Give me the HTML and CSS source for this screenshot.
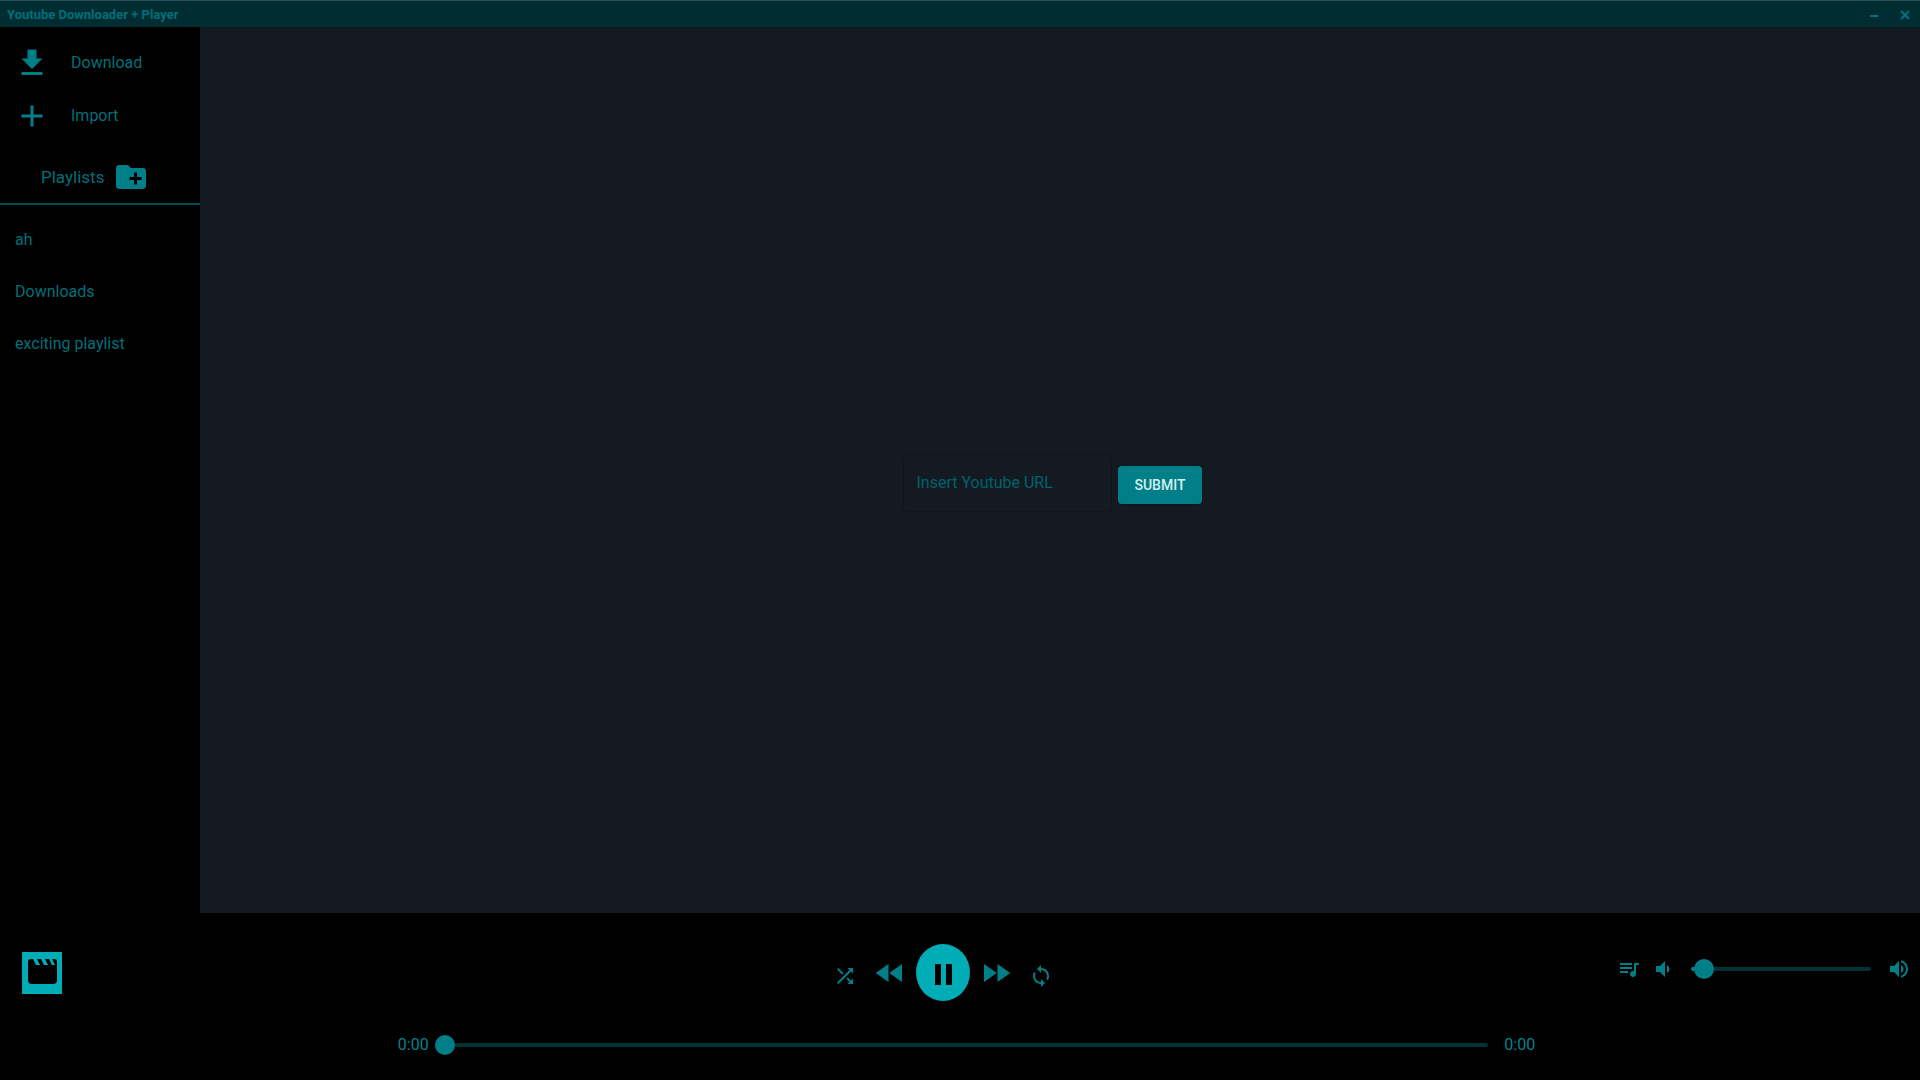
FILE: index.html
```html
<!DOCTYPE html>
<html lang="en">
<head>
    <meta charset="UTF-8">
    <meta name="viewport" content="width=device-width, initial-scale=1.0">
    <title>Youtube Downloader + Player</title>
    <link rel="stylesheet" href="styles.css">
</head>
<body>
    <header class="titlebar">
        <h1>Youtube Downloader + Player</h1>
        <div class="window-buttons">
            <button aria-label="Minimize"><svg width="10" height="10" viewBox="0 0 10 10"><path d="M1 6h8"/></svg></button>
            <button aria-label="Close"><svg width="10" height="10" viewBox="0 0 10 10"><path d="M1 1l8 8M9 1l-8 8"/></svg></button>
        </div>
    </header>

    <div class="content">
        <nav class="sidebar">
            <button class="nav-item">
                <svg class="icon" width="36" height="36" viewBox="0 0 24 24"><path d="M19 9h-4V3H9v6H5l7 7 7-7zM5 18v2h14v-2H5z"/></svg>
                <span>Download</span>
            </button>
            <button class="nav-item">
                <svg class="icon" width="36" height="36" viewBox="0 0 24 24"><path d="M19 13h-6v6h-2v-6H5v-2h6V5h2v6h6v2z"/></svg>
                <span>Import</span>
            </button>
            <div class="playlists-header">
                <h2>Playlists</h2>
                <button aria-label="New playlist">
                    <svg class="icon" width="36" height="36" viewBox="0 0 24 24"><path d="M20 6h-8l-2-2H4c-1.110 0-1.990.890-1.990 2L2 18c0 1.110.890 2 2 2h16c1.110 0 2-.890 2-2V8c0-1.110-.890-2-2-2zm-1 8h-3v3h-2v-3h-3v-2h3V9h2v3h3v2z"/></svg>
                </button>
            </div>
            <ul class="playlists">
                <li><a href="#">ah</a></li>
                <li><a href="#">Downloads</a></li>
                <li><a href="#">exciting playlist</a></li>
            </ul>
        </nav>

        <main class="main">
            <form class="url-form">
                <input type="text" class="url-input" placeholder="Insert Youtube URL" aria-label="Insert Youtube URL">
                <button type="submit" class="submit-btn">Submit</button>
            </form>
        </main>
    </div>

    <footer class="player">
        <div class="player-top">
            <div class="cover">
                <svg width="40" height="42" viewBox="0 0 40 42">
                    <rect class="cover-bg" width="40" height="42"/>
                    <path d="M9 7h2l3 6h4l-3-6h4l3 6h4l-3-6h4l3 6h3l-3-6h3q2 0 2 3v18q0 4-4 4H10q-4 0-4-4V10q0-3 3-3z"/>
                </svg>
            </div>
            <div class="controls">
                <button class="small-btn" aria-label="Shuffle"><svg class="icon" width="24" height="24" viewBox="0 0 24 24"><path d="M10.590 9.170L5.410 4 4 5.410l5.170 5.170 1.420-1.410zM14.500 4l2.040 2.040L4 18.590 5.410 20 17.960 7.460 20 9.500V4h-5.500zm.330 9.410l-1.410 1.410 3.130 3.130L14.500 20H20v-5.500l-2.040 2.040-3.130-3.130z"/></svg></button>
                <button aria-label="Previous"><svg class="icon" width="36" height="36" viewBox="0 0 24 24"><path d="M11 18V6l-8.500 6 8.500 6zm.5-6l8.500 6V6l-8.500 6z"/></svg></button>
                <button class="pause-btn" aria-label="Pause"><svg width="20" height="24" viewBox="0 0 20 24"><path d="M2 3h6v21H2zM13 3h6v21h-6z"/></svg></button>
                <button aria-label="Next"><svg class="icon" width="36" height="36" viewBox="0 0 24 24"><path d="M4 18l8.500-6L4 6v12zm9-12v12l8.500-6L13 6z"/></svg></button>
                <button class="small-btn" aria-label="Repeat"><svg class="icon" width="24" height="24" viewBox="0 0 24 24"><path d="M12 4V1L8 5l4 4V6c3.310 0 6 2.690 6 6 0 1.010-.250 1.970-.700 2.800l1.460 1.460C19.540 15.030 20 13.570 20 12c0-4.420-3.580-8-8-8zm0 14c-3.310 0-6-2.690-6-6 0-1.010.250-1.970.700-2.800L5.240 7.740C4.460 8.970 4 10.430 4 12c0 4.420 3.580 8 8 8v3l4-4-4-4v3z"/></svg></button>
            </div>
            <div class="volume">
                <button aria-label="Queue"><svg class="icon" width="24" height="24" viewBox="0 0 24 24"><path d="M15 6H3v2h12V6zm0 4H3v2h12v-2zM3 16h8v-2H3v2zM17 6v8.180c-.310-.110-.650-.180-1-.180-1.660 0-3 1.340-3 3s1.340 3 3 3 3-1.340 3-3V8h3V6h-5z"/></svg></button>
                <svg class="icon" width="24" height="24" viewBox="0 0 24 24"><path d="M18.500 12c0-1.770-1.020-3.290-2.500-4.030v8.050c1.480-.730 2.500-2.250 2.500-4.020zM5 9v6h4l5 5V4L9 9H5z"/></svg>
                <input type="range" class="slider volume-slider" min="0" max="100" value="2" aria-label="Volume">
                <svg class="icon" width="24" height="24" viewBox="0 0 24 24"><path d="M3 9v6h4l5 5V4L7 9H3zm13.500 3c0-1.770-1.020-3.290-2.500-4.030v8.050c1.480-.730 2.500-2.250 2.500-4.020zM14 3.230v2.060c2.890.860 5 3.540 5 6.710s-2.110 5.850-5 6.710v2.060c4.010-.910 7-4.490 7-8.770s-2.990-7.860-7-8.770z"/></svg>
            </div>
        </div>
        <div class="seek">
            <span>0:00</span>
            <input type="range" class="slider seek-slider" min="0" max="100" value="0" aria-label="Seek">
            <span>0:00</span>
        </div>
    </footer>
</body>
</html>
```
FILE: styles.css
```css
* {
    box-sizing: border-box;
}

body {
    margin: 0;
    height: 100vh;
    display: flex;
    flex-direction: column;
    background-color: #000;
    color: #006f78;
    font-family: Roboto, sans-serif;
    font-size: 16px;
    line-height: 24px;
    overflow: hidden;
}

h1, h2 {
    margin: 0;
    font-weight: 400;
    font-size: 17px;
}

button {
    display: flex;
    align-items: center;
    justify-content: center;
    padding: 0;
    border: none;
    background: none;
    color: inherit;
    font: inherit;
    cursor: pointer;
}

svg {
    display: block;
    flex-shrink: 0;
}

.icon {
    fill: #007f88;
}

/* Title bar */
.titlebar {
    display: flex;
    align-items: center;
    justify-content: space-between;
    height: 27px;
    padding: 2px 10px 0 7px;
    border-top: 1px solid #2c4f56;
    background-color: #002d32;
}

.titlebar h1 {
    font-size: 13px;
    font-weight: 700;
}

.window-buttons {
    display: flex;
    gap: 21px;
}

.window-buttons svg {
    stroke: #00737b;
    stroke-width: 2;
}

.content {
    flex: 1;
    display: flex;
    min-height: 0;
}

/* Sidebar */
.sidebar {
    width: 200px;
    padding-top: 9px;
}

.nav-item {
    width: 100%;
    height: 53px;
    padding-left: 14px;
    gap: 21px;
    justify-content: flex-start;
}

.playlists-header {
    display: flex;
    align-items: center;
    gap: 9px;
    height: 63px;
    padding: 9px 0 0 41px;
    border-bottom: 2px solid #004b51;
}

.playlists {
    margin: 0;
    padding: 9px 0;
    list-style: none;
}

.playlists a {
    display: block;
    padding: 14px 15px;
    color: inherit;
    text-decoration: none;
}

/* Download form */
.main {
    flex: 1;
    display: flex;
    align-items: center;
    justify-content: center;
    padding: 26px 15px 0 0;
    background-color: #131a21;
}

.url-form {
    display: flex;
    align-items: center;
    gap: 6px;
}

.url-input {
    width: 209px;
    height: 58px;
    padding: 0 12px 2px;
    border: 1px solid #10151b;
    border-radius: 4px;
    background: none;
    color: inherit;
    font: inherit;
}

.url-input::placeholder {
    color: #00636c;
}

.submit-btn {
    height: 38px;
    margin-top: 4px;
    padding: 0 16px;
    border-radius: 4px;
    background-color: #007f88;
    box-shadow: 0 1px 3px rgba(0, 0, 0, 0.3);
    color: #d5eeee;
    font-size: 14px;
    font-weight: 500;
    text-transform: uppercase;
}

/* Player */
.player {
    height: 167px;
    padding: 31px 9px 0 22px;
}

.player-top {
    display: grid;
    grid-template-columns: 1fr auto 1fr;
    align-items: center;
}

.cover-bg {
    fill: #00acb5;
}

.controls {
    display: flex;
    align-items: center;
    gap: 8px;
    margin-right: 47px;
}

.small-btn {
    margin: 0 7px;
    padding-top: 6px;
}

.pause-btn {
    width: 54px;
    height: 57px;
    border-radius: 50%;
    background-color: #00acb5;
}

.volume {
    display: flex;
    align-items: center;
    justify-content: flex-end;
    gap: 10px;
    padding-bottom: 8px;
}

.seek {
    display: flex;
    align-items: center;
    gap: 6px;
    width: calc(60% + 4px);
    margin: 32px auto 0;
    color: #00838c;
}

.slider {
    -webkit-appearance: none;
    appearance: none;
    height: 20px;
    margin: 0;
    background: none;
}

.slider::-webkit-slider-runnable-track {
    height: 4px;
    border-radius: 2px;
    background-color: #003236;
}

.slider::-webkit-slider-thumb {
    -webkit-appearance: none;
    width: 20px;
    height: 20px;
    margin-top: -8px;
    border-radius: 50%;
    background-color: #007f88;
}

.volume-slider {
    width: 180px;
    margin: 0 6px;
}

.volume-slider::-webkit-slider-runnable-track {
    background-image: linear-gradient(to right, #007f88 8%, transparent 8%);
}

.seek-slider {
    flex: 1;
    margin-right: 10px;
}
```
